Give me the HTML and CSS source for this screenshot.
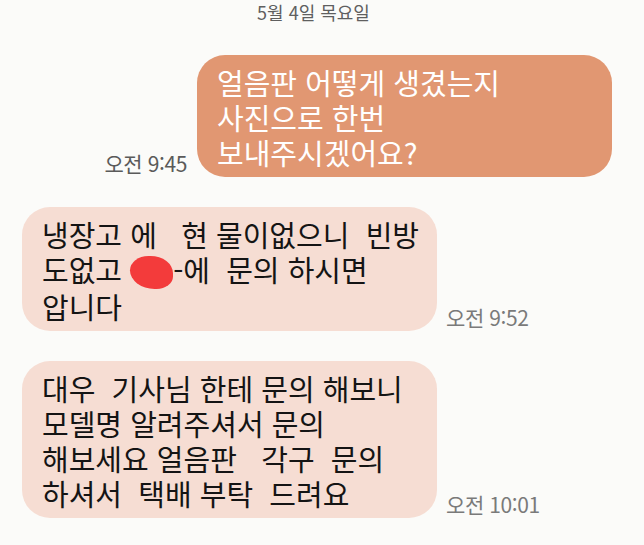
FILE: index.html
```html
<!DOCTYPE html>
<html lang="ko">
<head>
<meta charset="UTF-8">
<title>메시지</title>
<link rel="stylesheet" href="styles.css">
</head>
<body>

<div class="chat">
<!-- Date divider -->
<div class="date">5월 4일 목요일</div>

<!-- Sent message -->
<div class="row sent">
<span class="time">오전 9:45</span>
<div class="bubble out">얼음판 어떻게 생겼는지
사진으로 한번
보내주시겠어요?</div>
</div>

<!-- Received messages -->
<div class="row received">
<div class="bubble in">냉장고 에   현 물이없으니  빈방
도없고 <span class="hidden"></span>-에  문의 하시면
압니다</div>
<span class="time">오전 9:52</span>
</div>

<div class="row received">
<div class="bubble in">대우  기사님 한테 문의 해보니
모델명 알려주셔서 문의
해보세요 얼음판   각구  문의
하셔서  택배 부탁  드려요</div>
<span class="time">오전 10:01</span>
</div>
</div>

</body>
</html>
```

FILE: styles.css
```css
/* General styling */
body {
    margin: 0;
    background: #fbfbf9;
    font-family: "Noto Sans CJK KR", "Noto Sans", sans-serif;
}

.chat {
    display: flex;
    flex-direction: column;
    width: 644px;
    height: 545px;
    overflow: hidden;
}

.date {
    width: 627px;
    text-align: center;
    font-size: 18px;
    line-height: 24px;
    color: #5f5f5f;
    margin-bottom: 31px;
}

.row {
    display: flex;
    align-items: flex-end;
    margin-bottom: 30px;
}

.sent {
    justify-content: flex-end;
    padding-right: 32px;
}

.received {
    padding-left: 22px;
}

/* Bubbles */
.bubble {
    width: 415px;
    white-space: pre;
    font-size: 29px;
    line-height: 35px;
    padding: 10px 20px 7px;
    border-radius: 28px;
    box-sizing: border-box;
}

.out {
    background: #e19772;
    color: #fff;
}

.in {
    background: #f6ddd3;
    color: #141414;
}

.hidden {
    display: inline-block;
    vertical-align: -7px;
    width: 43px;
    height: 33px;
    background: #f33b3b;
    border-radius: 45% 55% 40% 60%;
}

.time {
    font-size: 21px;
    letter-spacing: -0.4px;
    line-height: 24px;
    color: #7a7a7a;
    padding-bottom: 2px;
}

.sent .time {
    color: #5a5a5a;
    margin-right: 10px;
}

.received .time {
    margin-left: 9px;
}
```
